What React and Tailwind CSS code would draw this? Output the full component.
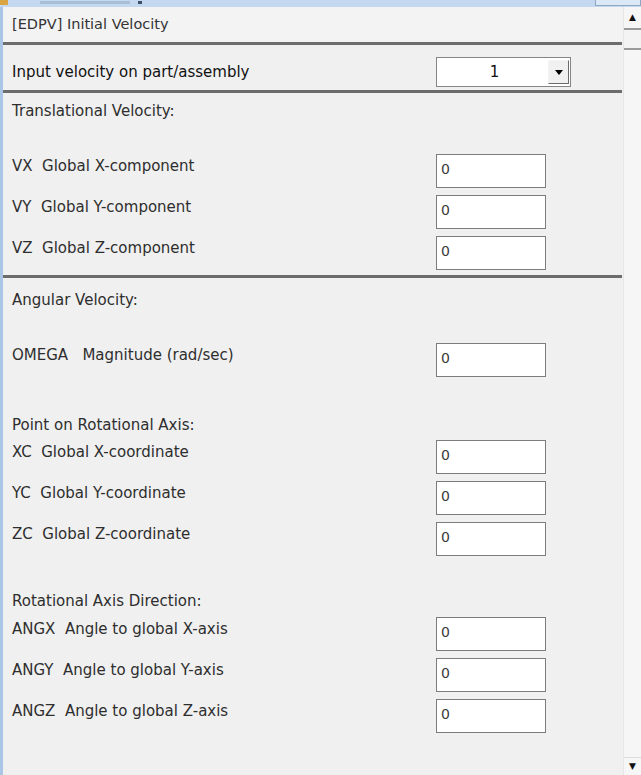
import React from 'react';

const font = { fontFamily: '"DejaVu Sans", "Liberation Sans", sans-serif' };

const Separator = ({ className = '' }) => (
  <div className={`h-[3px] bg-[#6c6c6c] mr-[1px] ${className}`} />
);

const Field = ({ label, value = '0', className = '' }) => (
  <div className={`flex items-start h-[34px] ${className}`}>
    <div className="w-[433px] shrink-0 pl-[9px] mt-[2px] leading-[20px] text-[15px] text-[#2e2e2e] whitespace-pre">
      {label}
    </div>
    <div className="w-[110px] h-[34px] bg-white border border-[#7c7c7c] pl-[4px] pt-[4px] leading-[20px] text-[14px] text-[#3a3a3a]">
      {value}
    </div>
  </div>
);

const SectionLabel = ({ children, className = '' }) => (
  <div className={`pl-[9px] leading-[20px] text-[15px] text-[#2e2e2e] ${className}`}>{children}</div>
);

const Scrollbar = () => (
  <div className="w-[18px] shrink-0 flex flex-col justify-between bg-[#f6f6f6] border-l border-[#e6e6e6]">
    <div className="flex flex-col">
      <div className="h-[21px] flex items-center justify-center text-[9px] leading-none text-[#111]">▲</div>
      <div className="h-[22px] border-y-2 border-[#9a9a9a] bg-[#f3f3f3]" />
    </div>
    <div className="h-[18px] flex items-center justify-center border-t border-[#dcdcdc] text-[9px] leading-none text-[#111]">▼</div>
  </div>
);

export default function App() {
  return (
    <div className="w-[641px] h-[775px] overflow-hidden bg-[#f0f0f0] flex flex-col" style={font}>
      {/* cut-off window title bar */}
      <div className="h-[7px] shrink-0 bg-[#c4d9ef] flex items-start">
        <div className="w-[8px] h-[5px] bg-[#d9a441]" />
        <div className="ml-[32px] w-[90px] h-[3px] mt-[1px] bg-[#a9bfd6]" />
        <div className="ml-[8px] w-[4px] h-[3px] mt-[1px] bg-[#3b4f66]" />
        <div className="flex-1" />
        <div className="w-[46px] h-[6px] border border-t-0 border-[#8ea7c2] bg-[#dbe8f5]" />
      </div>

      <div className="flex h-[768px]">
        <div className="w-[3px] shrink-0 bg-[#a9c6e6]" />

        <div className="flex-1 min-w-0 flex flex-col">
          {/* header */}
          <div className="h-[35px] flex items-center pl-[9px] text-[14.5px] text-[#333] bg-[#f3f3f3]">
            [EDPV] Initial Velocity
          </div>
          <Separator />

          {/* part selector row */}
          <div className="flex items-start pt-[12px] pb-[3px]">
            <div className="w-[433px] shrink-0 pl-[9px] mt-[5px] leading-[20px] text-[15px] text-[#111]">
              Input velocity on part/assembly
            </div>
            <div className="w-[135px] h-[30px] bg-white border border-[#858585] flex">
              <div className="flex-1 flex items-center justify-center pl-[4px] text-[15px] text-[#111]">1</div>
              <div className="w-[21px] my-[2px] mr-[1px] border border-t-[#f4f4f4] border-l-[#f4f4f4] border-b-[#6a6a6a] border-r-[#6a6a6a] bg-[#f0f0f0] flex items-center justify-center">
                <div className="w-0 h-0 border-x-[4px] border-x-transparent border-t-[5px] border-t-black" />
              </div>
            </div>
          </div>
          <Separator />

          {/* translational */}
          <SectionLabel className="mt-[8px]">Translational Velocity:</SectionLabel>
          <Field label="VX  Global X-component" className="mt-[33px]" />
          <Field label="VY  Global Y-component" className="mt-[7px]" />
          <Field label="VZ  Global Z-component" className="mt-[7px]" />
          <Separator className="mt-[5px]" />

          {/* angular */}
          <SectionLabel className="mt-[12px]">Angular Velocity:</SectionLabel>
          <Field label="OMEGA   Magnitude (rad/sec)" className="mt-[33px]" />

          <SectionLabel className="mt-[38px]">Point on Rotational Axis:</SectionLabel>
          <Field label="XC  Global X-coordinate" className="mt-[5px]" />
          <Field label="YC  Global Y-coordinate" className="mt-[7px]" />
          <Field label="ZC  Global Z-coordinate" className="mt-[7px]" />

          <SectionLabel className="mt-[35px]">Rotational Axis Direction:</SectionLabel>
          <Field label="ANGX  Angle to global X-axis" className="mt-[6px]" />
          <Field label="ANGY  Angle to global Y-axis" className="mt-[7px]" />
          <Field label="ANGZ  Angle to global Z-axis" className="mt-[7px]" />
        </div>

        <Scrollbar />
      </div>
    </div>
  );
}
